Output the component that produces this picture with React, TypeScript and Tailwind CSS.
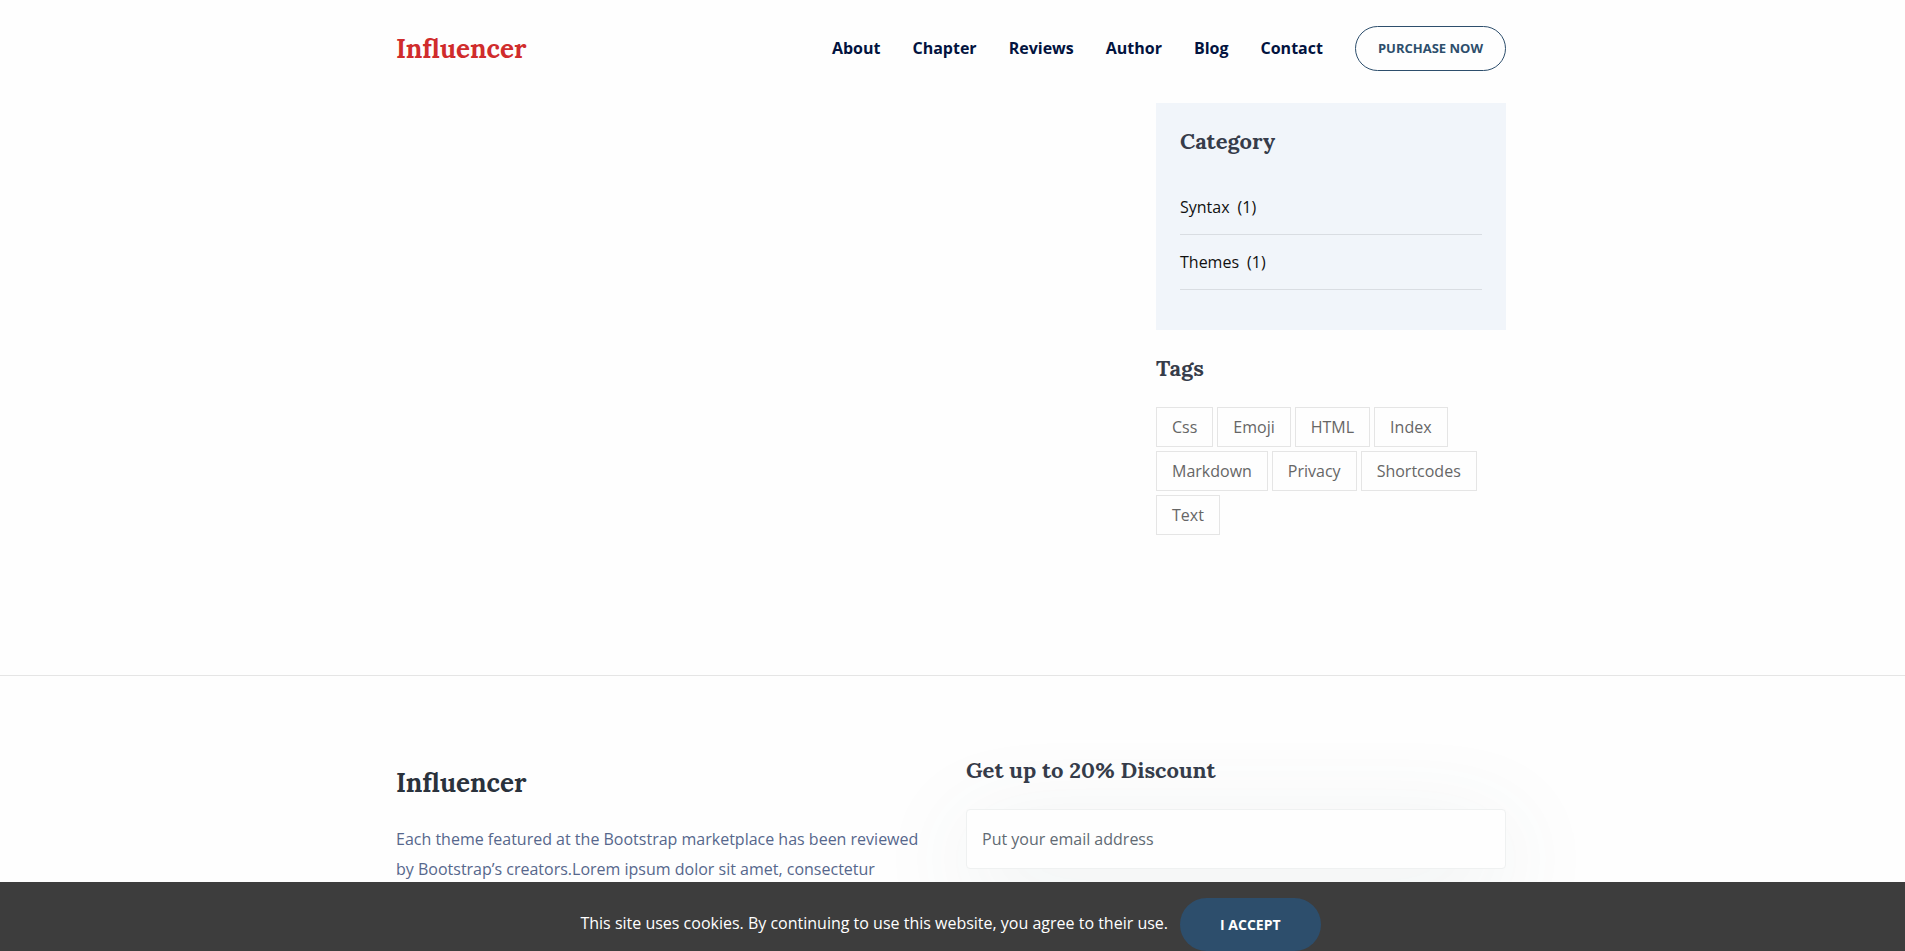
import React from "react";

const navItems = ["About", "Chapter", "Reviews", "Author", "Blog", "Contact"];

const categories = [
  { name: "Syntax", count: 1 },
  { name: "Themes", count: 1 },
];

const tags = ["Css", "Emoji", "HTML", "Index", "Markdown", "Privacy", "Shortcodes", "Text"];

const serif = "font-['Lora','Liberation_Serif',serif] font-bold";

function Container({ className = "", children }: { className?: string; children: React.ReactNode }) {
  return (
    <div className={`mx-auto w-full max-w-[1143px] pl-[15px] pr-[18px] ${className}`}>{children}</div>
  );
}

function Header() {
  return (
    <header>
      <Container className="flex items-center justify-between pt-[26px] pb-8">
        <a href="#" className={`${serif} text-[26px] leading-[45px] text-[#d02c2c]`}>
          Influencer
        </a>
        <nav className="flex items-center gap-8">
          {navItems.map((item) => (
            <a key={item} href={`#${item.toLowerCase()}`} className="pb-0.5 text-base font-bold text-[#02133e]">
              {item}
            </a>
          ))}
          <a
            href="#purchase"
            className="flex h-[45px] items-center rounded-[25px] border border-[#2d4e6c] px-[22px] text-[13px] font-bold text-[#2d4e6c]"
          >
            PURCHASE NOW
          </a>
        </nav>
      </Container>
    </header>
  );
}

function Sidebar() {
  return (
    <aside className="w-[350px]">
      <section className="bg-[#f1f5fa] px-6 pt-6 pb-10">
        <h4 className={`${serif} mb-6 text-[22px] leading-[29px] text-[#363c4a]`}>Category</h4>
        <ul>
          {categories.map((c) => (
            <li key={c.name} className="flex h-[55px] items-center border-b border-[#d9dde2]">
              <a href={`#${c.name.toLowerCase()}`} className="flex gap-2 text-base text-[#101010]">
                <span>{c.name}</span>
                <span>({c.count})</span>
              </a>
            </li>
          ))}
        </ul>
      </section>
      <section className="pt-6">
        <h4 className={`${serif} mb-6 text-[22px] leading-[29px] text-[#363c4a]`}>Tags</h4>
        <ul className="flex flex-wrap gap-1">
          {tags.map((t) => (
            <li key={t}>
              <a
                href={`#${t.toLowerCase()}`}
                className="flex h-10 items-center border border-[#e5e5e5] px-[15px] text-base text-[#666666]"
              >
                {t}
              </a>
            </li>
          ))}
        </ul>
      </section>
    </aside>
  );
}

function Footer() {
  return (
    <footer className="border-t border-[#e5e5e5]">
      <Container className="grid grid-cols-2 gap-[30px] pt-20">
        <div className="pt-2">
          <h3 className={`${serif} text-[26px] leading-[38px] text-[#2a323c]`}>Influencer</h3>
          <p className="mt-[22px] text-base leading-[30px] text-[#56678c]">
            Each theme featured at the Bootstrap marketplace has been reviewed by Bootstrap’s
            creators.Lorem ipsum dolor sit amet, consectetur
          </p>
        </div>
        <form>
          <label htmlFor="email" className={`${serif} block text-[22px] leading-[29px] text-[#363c4a]`}>
            Get up to 20% Discount
          </label>
          <input
            id="email"
            type="email"
            placeholder="Put your email address"
            className="mt-6 h-[60px] w-full rounded border border-[#eff1f1] bg-[#fefefe] px-[15px] text-base text-[#495057] shadow-[0_20px_100px_rgba(67,100,95,0.1)] outline-none placeholder:text-[#616a73]"
          />
        </form>
      </Container>
    </footer>
  );
}

function CookieBar() {
  return (
    <div className="fixed inset-x-0 bottom-0 flex h-[69px] items-start justify-center gap-3 overflow-hidden bg-[#3d3d3d] pt-4 pr-1">
      <p className="text-base leading-[50px] text-white">
        This site uses cookies. By continuing to use this website, you agree to their use.
      </p>
      <button
        type="button"
        className="h-[53px] rounded-[30px] bg-[#2d4e6c] px-10 text-sm font-bold text-white"
      >
        I ACCEPT
      </button>
    </div>
  );
}

export default function App() {
  return (
    <div className="h-screen overflow-hidden bg-[#fefefe] font-['Open_Sans','Noto_Sans',sans-serif]">
      <Header />
      <main>
        <Container className="flex justify-end pb-[140px]">
          <Sidebar />
        </Container>
      </main>
      <Footer />
      <CookieBar />
    </div>
  );
}
